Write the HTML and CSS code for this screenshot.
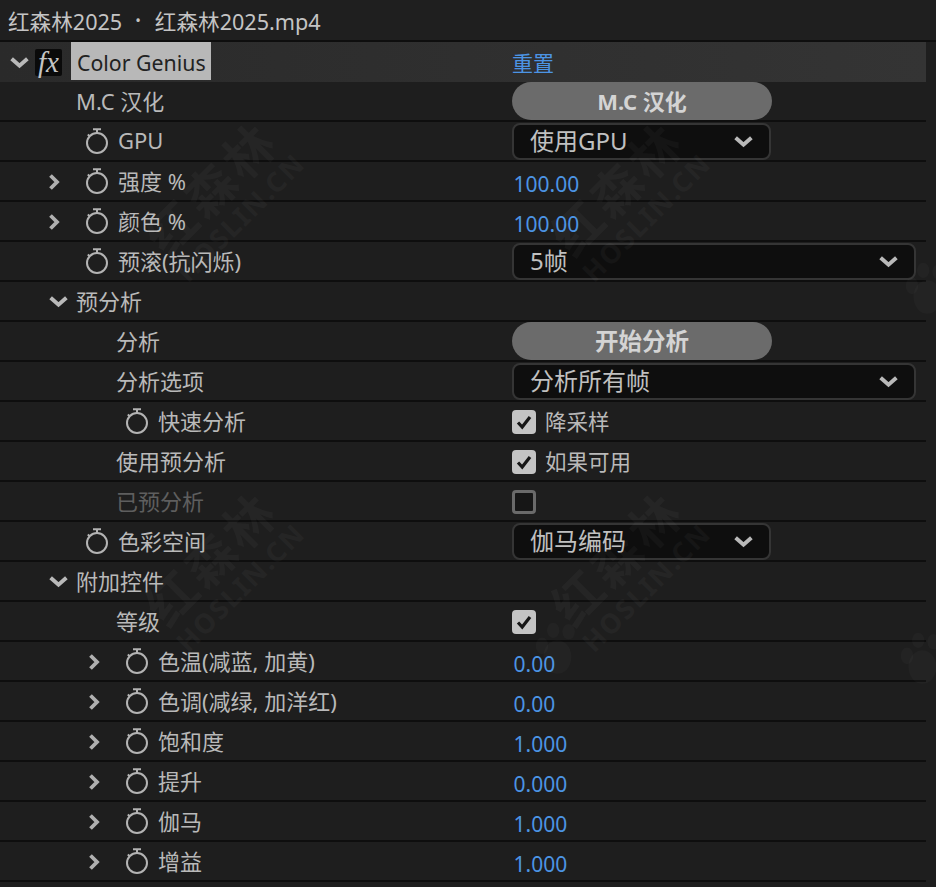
FILE: index.html
```html
<!DOCTYPE html>
<html lang="zh-CN">
<head>
<meta charset="utf-8">
<title>Color Genius</title>
<link rel="stylesheet" href="styles.css">
</head>
<body>
<svg class="defs" aria-hidden="true">
  <symbol id="watch" viewBox="0 0 24 28">
    <circle cx="12" cy="16" r="10" fill="none" stroke="currentColor" stroke-width="2"/>
    <path d="M8 2.2H16M12 2.2V6M2.8 7.4L5 9.4" fill="none" stroke="currentColor" stroke-width="2"/>
  </symbol>
  <symbol id="right" viewBox="0 0 12 18">
    <path d="M2.5 2.5L9 9L2.5 15.5" fill="none" stroke="currentColor" stroke-width="3.8"/>
  </symbol>
  <symbol id="down" viewBox="0 0 20 12">
    <path d="M2.5 2.5L10 9L17.5 2.5" fill="none" stroke="currentColor" stroke-width="3.8"/>
  </symbol>
  <symbol id="check" viewBox="0 0 24 24">
    <path d="M6 12.5L10.2 17L18 7" fill="none" stroke="currentColor" stroke-width="3.2"/>
  </symbol>
  <symbol id="paw" viewBox="0 0 60 80">
    <ellipse cx="32" cy="50" rx="20" ry="24"/>
    <ellipse cx="10" cy="34" rx="9" ry="12"/>
    <ellipse cx="26" cy="12" rx="9" ry="11"/>
    <ellipse cx="48" cy="14" rx="9" ry="11"/>
  </symbol>
</svg>

<div class="panel">
  <div class="title">红森林2025<span class="title-dot">•</span>红森林2025.mp4</div>

  <div class="effect-head">
    <div class="label">
      <svg class="chev-down head-chev"><use href="#down"/></svg>
      <span class="fx">fx</span>
      <span class="effect-name">Color Genius</span>
    </div>
    <span class="reset">重置</span>
  </div>

  <div class="row"><div class="label l1"><span class="slot"></span><span>M.C 汉化</span></div><button class="pill">M.C 汉化</button></div>

  <div class="row"><div class="label l1"><span class="slot"></span><svg class="watch"><use href="#watch"/></svg><span>GPU</span></div>
    <div class="select"><span>使用GPU</span><svg class="chev-down"><use href="#down"/></svg></div></div>

  <div class="row"><div class="label l1"><span class="slot"><svg class="chev-right"><use href="#right"/></svg></span><svg class="watch"><use href="#watch"/></svg><span>强度 %</span></div><span class="value">100.00</span></div>

  <div class="row"><div class="label l1"><span class="slot"><svg class="chev-right"><use href="#right"/></svg></span><svg class="watch"><use href="#watch"/></svg><span>颜色 %</span></div><span class="value">100.00</span></div>

  <div class="row"><div class="label l1"><span class="slot"></span><svg class="watch"><use href="#watch"/></svg><span>预滚(抗闪烁)</span></div>
    <div class="select wide"><span>5帧</span><svg class="chev-down"><use href="#down"/></svg></div></div>

  <div class="row"><div class="label l1"><span class="slot"><svg class="chev-down"><use href="#down"/></svg></span><span>预分析</span></div></div>

  <div class="row"><div class="label l2"><span class="slot"></span><span>分析</span></div><button class="pill pill-cjk">开始分析</button></div>

  <div class="row"><div class="label l2"><span class="slot"></span><span>分析选项</span></div>
    <div class="select wide"><span>分析所有帧</span><svg class="chev-down"><use href="#down"/></svg></div></div>

  <div class="row"><div class="label l2"><span class="slot"></span><svg class="watch"><use href="#watch"/></svg><span>快速分析</span></div>
    <div class="check-wrap"><span class="box on"><svg class="tick"><use href="#check"/></svg></span><span>降采样</span></div></div>

  <div class="row"><div class="label l2"><span class="slot"></span><span>使用预分析</span></div>
    <div class="check-wrap"><span class="box on"><svg class="tick"><use href="#check"/></svg></span><span>如果可用</span></div></div>

  <div class="row"><div class="label l2 dim"><span class="slot"></span><span>已预分析</span></div>
    <div class="check-wrap"><span class="box off"></span></div></div>

  <div class="row"><div class="label l1"><span class="slot"></span><svg class="watch"><use href="#watch"/></svg><span>色彩空间</span></div>
    <div class="select"><span>伽马编码</span><svg class="chev-down"><use href="#down"/></svg></div></div>

  <div class="row"><div class="label l1"><span class="slot"><svg class="chev-down"><use href="#down"/></svg></span><span>附加控件</span></div></div>

  <div class="row"><div class="label l2"><span class="slot"></span><span>等级</span></div>
    <div class="check-wrap"><span class="box on"><svg class="tick"><use href="#check"/></svg></span></div></div>

  <div class="row"><div class="label l2"><span class="slot"><svg class="chev-right"><use href="#right"/></svg></span><svg class="watch"><use href="#watch"/></svg><span>色温(减蓝, 加黄)</span></div><span class="value">0.00</span></div>
  <div class="row"><div class="label l2"><span class="slot"><svg class="chev-right"><use href="#right"/></svg></span><svg class="watch"><use href="#watch"/></svg><span>色调(减绿, 加洋红)</span></div><span class="value">0.00</span></div>
  <div class="row"><div class="label l2"><span class="slot"><svg class="chev-right"><use href="#right"/></svg></span><svg class="watch"><use href="#watch"/></svg><span>饱和度</span></div><span class="value">1.000</span></div>
  <div class="row"><div class="label l2"><span class="slot"><svg class="chev-right"><use href="#right"/></svg></span><svg class="watch"><use href="#watch"/></svg><span>提升</span></div><span class="value">0.000</span></div>
  <div class="row"><div class="label l2"><span class="slot"><svg class="chev-right"><use href="#right"/></svg></span><svg class="watch"><use href="#watch"/></svg><span>伽马</span></div><span class="value">1.000</span></div>
  <div class="row"><div class="label l2"><span class="slot"><svg class="chev-right"><use href="#right"/></svg></span><svg class="watch"><use href="#watch"/></svg><span>增益</span></div><span class="value">1.000</span></div>

  <div class="wm wm-a"><span class="wm-cn">红森林</span><span class="wm-en">HOSLIN.CN</span></div>
  <div class="wm wm-b"><span class="wm-cn">红森林</span><span class="wm-en">HOSLIN.CN</span></div>
  <div class="wm wm-c"><span class="wm-cn">红森林</span><span class="wm-en">HOSLIN.CN</span></div>
  <div class="wm wm-d"><span class="wm-cn">红森林</span><span class="wm-en">HOSLIN.CN</span></div>
  <svg class="paw paw-a"><use href="#paw"/></svg>
  <svg class="paw paw-b"><use href="#paw"/></svg>
  <svg class="paw paw-c"><use href="#paw"/></svg>
</div>
</body>
</html>
```

FILE: styles.css
```css
* { box-sizing: border-box; }

html, body {
  margin: 0;
  height: 887px;
  overflow: hidden;
  background: #1e1e1e;
}

body {
  font-family: "Noto Sans", "Noto Sans CJK SC", sans-serif;
  font-size: 22px;
  color: #b9b9b9;
}

.defs { display: none; }

.panel {
  position: relative;
  width: 936px;
  height: 887px;
  overflow: hidden;
}

.title {
  height: 42px;
  padding: 2px 0 2px 8px;
  display: flex;
  align-items: center;
  background: #1f1f1f;
  border-bottom: 2px solid #0e0e0e;
  color: #c4c4c4;
  font-size: 21.6px;
}

.title-dot { margin: 0 14px 0 13px; font-size: 15px; }

.effect-head {
  width: 926px;
  height: 40px;
  display: flex;
  align-items: center;
  background: linear-gradient(90deg, #2a2a2a, #343434);
}

.head-chev { margin: 0 5px 0 9px; }

.fx {
  width: 27px;
  height: 27px;
  margin-right: 9px;
  display: flex;
  align-items: center;
  justify-content: center;
  background: #0a0a0a;
  border-radius: 2px;
  font-family: "Liberation Serif", serif;
  font-style: italic;
  font-size: 29px;
  line-height: 27px;
  color: #c4c4c4;
}

.effect-head .label > .effect-name { margin-bottom: 0; }

.effect-name {
  height: 38px;
  align-self: flex-start;
  padding: 3px 5px 0 6px;
  display: flex;
  align-items: center;
  background: #b8b8b8;
  color: #222;
  font-size: 21.3px;
}

.reset {
  color: #4c94e4;
  font-size: 21px;
}

.row {
  width: 926px;
  height: 40px;
  display: flex;
  align-items: center;
  border-bottom: 2px solid #0e0e0e;
}

.label {
  width: 512px;
  height: 100%;
  flex: none;
  display: flex;
  align-items: center;
}

.label > span:last-child { margin-bottom: 2px; }

.effect-head .label { height: 40px; }

.l1 { padding-left: 48px; }
.l2 { padding-left: 88px; }

.dim { color: #5e5e5e; }

.slot {
  width: 28px;
  height: 20px;
  flex: none;
  display: flex;
  align-items: center;
}

.watch {
  width: 24px;
  height: 28px;
  margin: 0 9px 0 9px;
  flex: none;
  color: #b4b4b4;
}

.chev-right {
  width: 12px;
  height: 18px;
  margin-top: 2px;
  color: #b0b0b0;
}

.chev-down {
  width: 21px;
  height: 13px;
  flex: none;
  color: #b9b9b9;
}

.value {
  padding: 6px 0 0 1.5px;
  color: #4c94e4;
  font-size: 21px;
}

.pill {
  width: 260px;
  height: 38px;
  padding: 0 0 2px;
  border: 0;
  border-radius: 19px;
  background: #6b6b6b;
  color: #d4d4d4;
  font: 700 22px "Noto Sans", "Noto Sans CJK SC", sans-serif;
}

.pill-cjk { font-size: 23.5px; }

.select {
  width: 259px;
  height: 37px;
  padding: 0 15px 0 16px;
  display: flex;
  align-items: center;
  justify-content: space-between;
  background: #0e0e0e;
  border: 2px solid #353535;
  border-radius: 8px;
  color: #c0c0c0;
  font-size: 24px;
}

.select > span { margin-bottom: 3px; }

.select.wide { width: 404px; }

.check-wrap {
  display: flex;
  align-items: center;
  gap: 9px;
  font-size: 21.5px;
}

.check-wrap > span:last-child:not(.box) { margin-bottom: 1px; }

.box {
  width: 24px;
  height: 24px;
  margin-top: 1px;
  display: block;
  border-radius: 4px;
}

.box.on { background: #c4c4c4; color: #161616; }
.box.off { background: #161616; border: 3px solid #6a6a6a; }

.tick { width: 24px; height: 24px; display: block; }

.wm {
  position: absolute;
  width: 220px;
  display: flex;
  flex-direction: column;
  align-items: center;
  transform: rotate(-45deg);
  color: rgba(255, 255, 255, 0.03);
  font-weight: 700;
  pointer-events: none;
}

.wm-cn { font-size: 50px; line-height: 52px; letter-spacing: 4px; }
.wm-en { font-size: 27px; line-height: 30px; letter-spacing: 2px; color: rgba(255, 255, 255, 0.9); opacity: 0.035; }

.wm-a { left: 112px; top: 158px; }
.wm-b { left: 518px; top: 158px; }
.wm-c { left: 112px; top: 528px; }
.wm-d { left: 518px; top: 528px; }

.paw {
  position: absolute;
  width: 42px;
  height: 56px;
  fill: rgba(255, 255, 255, 0.022);
  pointer-events: none;
}

.paw-a { left: 900px; top: 632px; }
.paw-b { left: 905px; top: 262px; }
.paw-c { left: 535px; top: 622px; }
```
